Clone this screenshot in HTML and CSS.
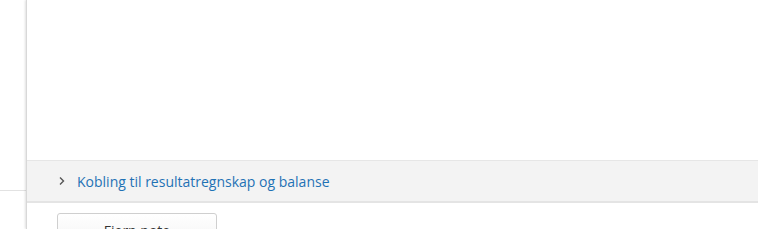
FILE: index.html
```html
<!DOCTYPE html>
<html lang="no">
<head>
  <meta charset="UTF-8" />
  <title>Note</title>
  <link rel="stylesheet" href="styles.css">
</head>
<body>
  <div class="page">
    <aside class="side">
      <div class="side-rule"></div>
    </aside>

    <main class="panel">
      <div class="panel-body"></div>

      <div class="section-bar">
        <svg class="chevron" width="8" height="10" viewBox="0 0 8 10">
          <path d="M2 1.5 L5.5 5 L2 8.5" fill="none" stroke="#555" stroke-width="1.4" />
        </svg>
        <a class="section-link" href="#">Kobling til resultatregnskap og balanse</a>
      </div>

      <div class="actions">
        <button class="btn">Fjern note</button>
      </div>
    </main>
  </div>
</body>
</html>
```

FILE: styles.css
```css
/* Base */
body {
  margin: 0;
  padding: 0;
  font-family: "Open Sans", Arial, sans-serif;
  background-color: #fff;
  overflow: hidden;
}

.page {
  display: flex;
  height: 229px;
}

/* Left strip */
.side {
  width: 26px;
  flex-shrink: 0;
  background-color: #fff;
}

.side-rule {
  margin-top: 190px;
  border-top: 1px solid #e2e2e2;
}

/* Main panel */
.panel {
  flex: 1;
  background-color: #fff;
  border-left: 1px solid #d8d8d8;
  box-shadow: -1px 0 2px rgba(0, 0, 0, 0.12);
}

.panel-body {
  height: 160px;
}

.section-bar {
  display: flex;
  align-items: center;
  height: 40px;
  background-color: #f3f3f3;
  border-top: 1px solid #e6e6e6;
  border-bottom: 2px solid #e4e4e4;
  padding-left: 31px;
}

.chevron {
  margin-right: 11px;
}

.section-link {
  color: #1f72b5;
  font-size: 14px;
  text-decoration: none;
}

/* Buttons */
.actions {
  padding: 10px 0 0 30px;
}

.btn {
  width: 160px;
  height: 32px;
  font-family: "Open Sans", Arial, sans-serif;
  font-size: 14px;
  color: #333;
  background: linear-gradient(#fff, #f4f4f4);
  border: 1px solid #cfcfcf;
  border-radius: 3px;
  padding: 4px 0 0;
  line-height: 18px;
  vertical-align: top;
}
```
